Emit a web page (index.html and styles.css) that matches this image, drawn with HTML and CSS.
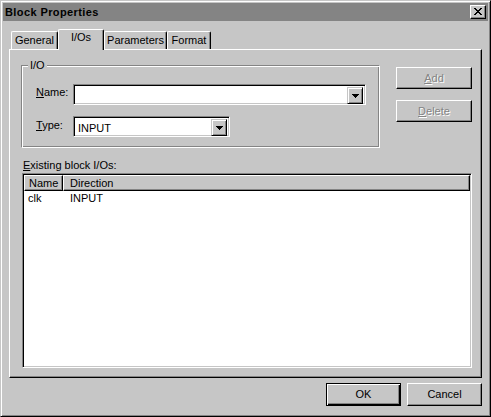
FILE: index.html
```html
<!DOCTYPE html>
<html>
<head>
<meta charset="utf-8">
<title>Block Properties</title>
<link rel="stylesheet" href="styles.css">
</head>
<body>
<div class="window">
  <div class="titlebar">
    <span class="title">Block Properties</span>
    <div class="close">
      <svg width="8" height="7" viewBox="0 0 8 7" shape-rendering="crispEdges"><path fill="#000" d="M0 0h2v1H0z M6 0h2v1H6z M1 1h2v1H1z M5 1h2v1H5z M2 2h4v1H2z M3 3h2v1H3z M2 4h4v1H2z M1 5h2v1H1z M5 5h2v1H5z M0 6h2v1H0z M6 6h2v1H6z"/></svg>
    </div>
  </div>
  <div class="tabs">
    <div class="tab t-general">General</div>
    <div class="tab t-ios active">I/Os</div>
    <div class="tab t-params">Parameters</div>
    <div class="tab t-format">Format</div>
  </div>
  <div class="panel">
    <div class="top">
      <div class="group">
        <div class="legend">I/O</div>
        <div class="fields">
          <div class="label label-name"><u>N</u>ame:</div>
          <div class="combo combo-name">
            <div class="combo-text"></div>
            <div class="drop"><svg width="7" height="4" viewBox="0 0 7 4" shape-rendering="crispEdges"><path fill="#000" d="M0 0h7v1H0z M1 1h5v1H1z M2 2h3v1H2z M3 3h1v1H3z"/></svg></div>
          </div>
          <div class="label label-type"><u>T</u>ype:</div>
          <div class="combo combo-type">
            <div class="combo-text">INPUT</div>
            <div class="drop"><svg width="7" height="4" viewBox="0 0 7 4" shape-rendering="crispEdges"><path fill="#000" d="M0 0h7v1H0z M1 1h5v1H1z M2 2h3v1H2z M3 3h1v1H3z"/></svg></div>
          </div>
        </div>
      </div>
      <div class="side">
        <div class="btn side-btn disabled"><u>A</u>dd</div>
        <div class="btn side-btn disabled"><u>D</u>elete</div>
      </div>
    </div>
    <div class="list-label"><u>E</u>xisting block I/Os:</div>
    <div class="list">
      <div class="header">
        <div class="hcell c1">Name</div>
        <div class="hcell c2">Direction</div>
      </div>
      <div class="row">
        <div class="cell c1">clk</div>
        <div class="cell c2">INPUT</div>
      </div>
    </div>
  </div>
  <div class="footer">
    <div class="btn foot-btn default">OK</div>
    <div class="btn foot-btn">Cancel</div>
  </div>
</div>
</body>
</html>
```
FILE: styles.css
```css
* { box-sizing: border-box; }
html, body { margin: 0; padding: 0; background: #c6c6c6; }
body {
  font-family: "Liberation Sans", Arial, sans-serif;
  font-size: 11px;
  color: #000;
}
u { text-decoration: underline; text-underline-offset: 1px; }

.window {
  width: 491px;
  height: 417px;
  border: 1px solid;
  border-color: #c6c6c6 #000 #000 #c6c6c6;
  box-shadow: inset 1px 1px #fff, inset -1px -1px #848484;
  padding: 2px;
  background: #c6c6c6;
  display: flex;
  flex-direction: column;
}

.titlebar {
  height: 18px;
  background: #848484;
  display: flex;
  align-items: center;
  justify-content: space-between;
  padding: 0 2px 0 2px;
  flex: none;
}
.title { font-weight: bold; line-height: 18px; letter-spacing: 0.4px; }
.close {
  width: 16px;
  height: 14px;
  background: #c6c6c6;
  border: 1px solid;
  border-color: #fff #000 #000 #fff;
  box-shadow: inset -1px -1px #848484;
  padding: 2px 0 0 3px;
  display: flex;
  align-items: flex-start;
}
.close svg { display: block; }

.tabs {
  margin: 8px 6px 0 6px;
  padding-left: 2px;
  height: 20px;
  display: flex;
  align-items: flex-end;
  flex: none;
}
.tab {
  height: 18px;
  border-top: 1px solid #fff;
  border-left: 1px solid #fff;
  border-right: 1px solid #000;
  border-radius: 2px 2px 0 0;
  box-shadow: inset -1px 0 #848484;
  text-align: center;
  line-height: 16px;
  background: #c6c6c6;
}
.t-general { width: 47px; }
.t-ios { width: 46px; }
.t-params { width: 63px; }
.t-format { width: 44px; }
.tab.active {
  height: 21px;
  margin-bottom: -1px;
  position: relative;
  z-index: 1;
  line-height: 15px;
}

.panel {
  margin: 0 6px;
  height: 329px;
  flex: none;
  border: 1px solid;
  border-color: #fff #000 #000 #fff;
  box-shadow: inset -1px -1px #848484;
  padding: 15px 9px 0 11px;
}

.top {
  display: flex;
  gap: 16px;
}
.group {
  width: 359px;
  height: 83px;
  border: 1px solid;
  border-color: #848484 #fff #fff #848484;
  box-shadow: inset 1px 1px #fff, inset -1px -1px #848484;
}
.legend {
  width: max-content;
  margin: -7px 0 0 6px;
  padding: 0 2px;
  line-height: 13px;
  background: #c6c6c6;
}
.fields {
  display: grid;
  grid-template-columns: 37px auto;
  grid-template-rows: 21px 21px;
  row-gap: 11px;
  margin: 12px 0 0 14px;
  justify-items: start;
}
.label { line-height: 17px; }
.label-type { line-height: 19px; }

.combo {
  height: 21px;
  border: 1px solid;
  border-color: #848484 #fff #fff #848484;
  box-shadow: inset 1px 1px #000, inset -1px -1px #c6c6c6;
  background: #fff;
  padding: 2px;
  display: flex;
}
.combo-name { width: 293px; }
.combo-type { width: 157px; }
.combo-text {
  flex: 1;
  padding-left: 2px;
  line-height: 17px;
}
.combo-type .combo-text { line-height: 19px; }
.drop {
  width: 16px;
  height: 17px;
  background: #c6c6c6;
  border: 1px solid;
  border-color: #c6c6c6 #000 #000 #c6c6c6;
  box-shadow: inset 1px 1px #fff, inset -1px -1px #848484;
  display: flex;
  align-items: center;
  justify-content: center;
}
.drop svg { display: block; }

.side {
  width: 76px;
  margin-top: 2px;
  display: flex;
  flex-direction: column;
  gap: 11px;
}
.btn {
  background: #c6c6c6;
  border: 1px solid;
  border-color: #fff #000 #000 #fff;
  box-shadow: inset -1px -1px #848484;
  text-align: center;
}
.side-btn { height: 22px; line-height: 20px; }
.disabled { color: #848484; text-shadow: 1px 1px #fff; }

.list-label {
  margin: 11px 0 1px 2px;
  line-height: 13px;
}
.list {
  margin-left: 1px;
  width: 450px;
  height: 195px;
  border: 1px solid;
  border-color: #848484 #fff #fff #848484;
  box-shadow: inset 1px 1px #000, inset -1px -1px #c6c6c6;
  background: #fff;
  padding: 1px;
}
.header {
  display: flex;
  height: 16px;
}
.hcell {
  background: #c6c6c6;
  border: 1px solid;
  border-color: #fff #000 #000 #fff;
  box-shadow: inset -1px -1px #848484;
  line-height: 14px;
}
.c1 { width: 39px; flex: none; }
.c2 { flex: 1; }
.hcell.c1 { padding-left: 4px; }
.hcell.c2 { padding-left: 6px; }
.row {
  display: flex;
  padding-top: 1px;
  line-height: 13px;
}
.cell.c1 { padding-left: 4px; }
.cell.c2 { padding-left: 7px; }

.footer {
  margin-top: 5px;
  padding-right: 6px;
  display: flex;
  justify-content: flex-end;
  gap: 6px;
  flex: none;
}
.foot-btn { width: 75px; height: 23px; line-height: 21px; }
.default {
  border-color: #000;
  box-shadow: inset 1px 1px #fff, inset -1px -1px #000, inset -2px -2px #848484;
}
```
